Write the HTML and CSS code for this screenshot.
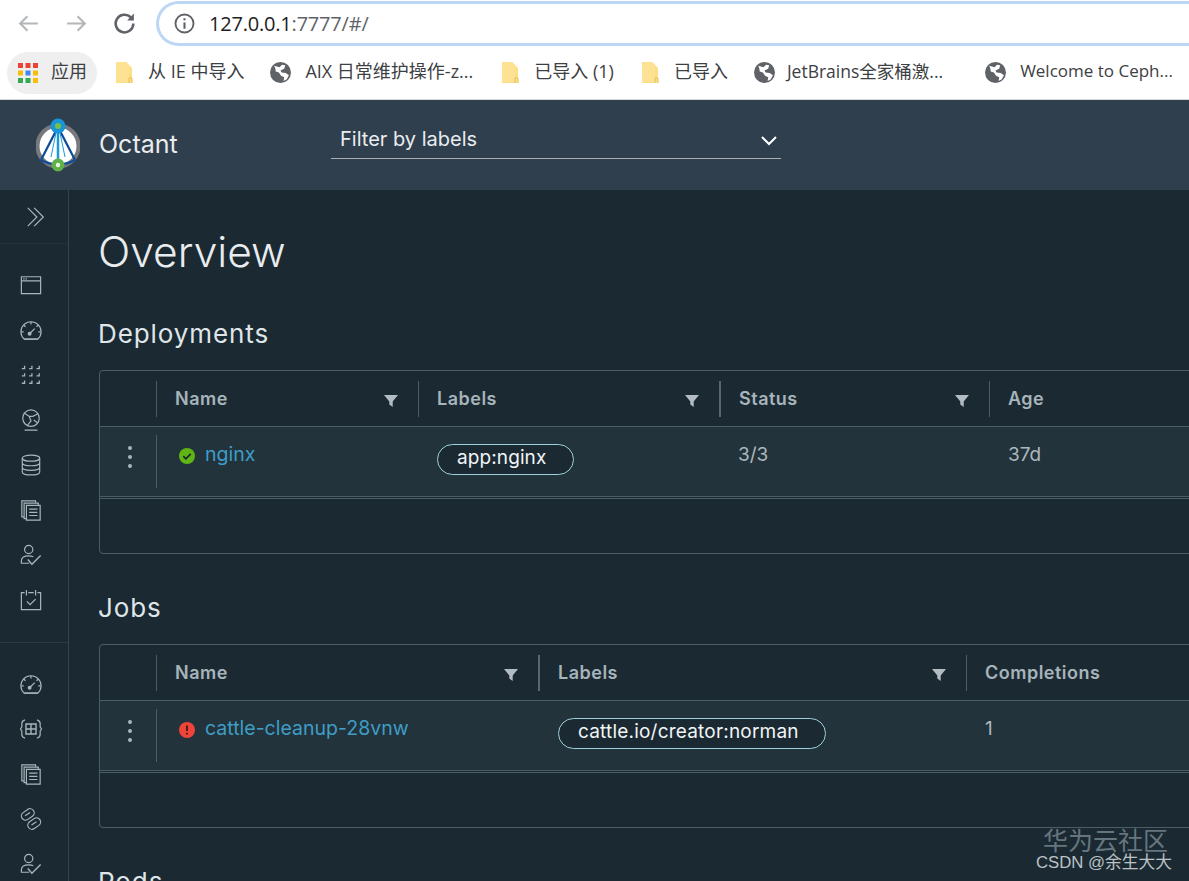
FILE: index.html
```html
<!DOCTYPE html>
<html lang="zh">
<head>
<meta charset="utf-8">
<title>Octant</title>
<link rel="stylesheet" href="styles.css">
</head>
<body>
<svg class="defs" width="0" height="0" aria-hidden="true">
  <symbol id="globe" viewBox="0 0 20 20"><circle cx="10" cy="10" r="10" fill="#5f6368"/><path d="M4 3.5l5 1.5 2.5-2.5 3 .5-1 3.5-3.5 1.5 1 2 4 .5 3 2-2 4-3 1.500.5-3.500-3-1.500-2-3-3-1-.5-3z" fill="#fff"/></symbol>
  <symbol id="folder" viewBox="0 0 18 22"><path d="M1 0h10l6 6v15H1z" fill="#fcdf84"/><path d="M1 0h10l3 3v17H1z" fill="#fde293"/><path d="M14 21v-5h3v5" fill="none" stroke="#e8bf5a"/></symbol>
  <symbol id="funnel" viewBox="0 0 16 16"><path d="M1 2h14L9.700 8.500V14L6.300 11.500V8.500z" fill="#b3bcc2"/></symbol>
  <symbol id="gauge" viewBox="0 0 24 24" fill="none" stroke="#a8b6bd" stroke-width="1.300"><g transform="translate(0 1.500)"><path d="M4.500 20.500A10.800 10.800 0 0 1 1 12.500a11 11 0 0 1 22 0 10.800 10.800 0 0 1-3.500 8z"/><path d="M4.500 20.500h15M12 1.500v3M4 5l2 2M20 5l-2 2M1.500 12.500h2.500M20 12.500h2.500M11 14l5-5"/><circle cx="10.500" cy="14.500" r="1.500" fill="#a8b6bd"/></g></symbol>
  <symbol id="pages" viewBox="0 0 24 24" fill="none" stroke="#a8b6bd" stroke-width="1.300"><path d="M4.500 19.500H2V2h15v2"/><path d="M7 21.500H4.500V4.500H20v2"/><path d="M7 7h15v16H7zM10 11h9M10 14.500h9M10 18h9"/></symbol>
  <symbol id="user" viewBox="0 0 24 24" fill="none" stroke="#a8b6bd" stroke-width="1.300"><circle cx="9.500" cy="6" r="4.500"/><path d="M10 21H1.500v-2.500c0-4 4-5.500 8-5.500 2 0 3.500.3 5 1"/><path d="M8.500 17l4.500 5 9.500-9.500" stroke-width="1.500"/></symbol>
</svg>

<div class="browser">
  <div class="toolbar">
    <svg class="nav-icon" viewBox="0 0 24 24" fill="none" stroke="#b4b7ba" stroke-width="2"><path d="M21 12H4M11 5l-7 7 7 7"/></svg>
    <svg class="nav-icon" viewBox="0 0 24 24" fill="none" stroke="#b4b7ba" stroke-width="2"><path d="M3 12h17M13 5l7 7-7 7"/></svg>
    <svg class="nav-icon" viewBox="0 0 24 24" fill="none" stroke="#5f6368" stroke-width="2.400"><path d="M20.500 12a8.500 8.500 0 1 1-2.500-6"/><path d="M21 2.500V9h-6.500z" fill="#5f6368" stroke="none"/></svg>
    <div class="omnibox">
      <svg class="info" viewBox="0 0 20 20" fill="none" stroke="#5f6368" stroke-width="1.800"><circle cx="10" cy="10" r="8.600"/><path d="M10 9v6" stroke-width="2"/><path d="M10 5v2" stroke-width="2"/></svg>
      <span class="url">127.0.0.1<span class="url-rest">:7777/#/</span></span>
    </div>
  </div>
  <div class="bookmarks">
    <div class="apps">
      <svg class="apps-grid" viewBox="0 0 20 20">
        <rect x="0" y="0" width="5" height="5" fill="#ea4335"/><rect x="7.500" y="0" width="5" height="5" fill="#ea4335"/><rect x="15" y="0" width="5" height="5" fill="#ea4335"/>
        <rect x="0" y="7.500" width="5" height="5" fill="#fbbc05"/><rect x="7.500" y="7.500" width="5" height="5" fill="#4285f4"/><rect x="15" y="7.500" width="5" height="5" fill="#fbbc05"/>
        <rect x="0" y="15" width="5" height="5" fill="#34a853"/><rect x="7.500" y="15" width="5" height="5" fill="#34a853"/><rect x="15" y="15" width="5" height="5" fill="#fbbc05"/>
      </svg>
      <span>应用</span>
    </div>
    <div class="bm bm-1"><svg class="bm-folder"><use href="#folder"/></svg><span>从 IE 中导入</span></div>
    <div class="bm bm-2"><svg class="bm-globe"><use href="#globe"/></svg><span>AIX 日常维护操作-z...</span></div>
    <div class="bm bm-3"><svg class="bm-folder"><use href="#folder"/></svg><span>已导入 (1)</span></div>
    <div class="bm bm-4"><svg class="bm-folder"><use href="#folder"/></svg><span>已导入</span></div>
    <div class="bm bm-5"><svg class="bm-globe"><use href="#globe"/></svg><span>JetBrains全家桶激...</span></div>
    <div class="bm bm-6"><svg class="bm-globe"><use href="#globe"/></svg><span>Welcome to Ceph...</span></div>
  </div>
</div>

<header class="app-header">
  <svg class="logo" viewBox="0 0 44 54">
    <circle cx="22" cy="28" r="20.500" fill="#fff" stroke="#77797c" stroke-width="4"/>
    <path d="M5 42L22 9l17 33" fill="none" stroke="#0d4c9b" stroke-width="2.200"/>
    <path d="M5 42q17 9 34 0" fill="none" stroke="#0d4c9b" stroke-width="2.500"/>
    <path d="M22 9v38" stroke="#1b9ad6" stroke-width="2.500"/>
    <path d="M15 39L21 10M29 39L23 10" fill="none" stroke="#1b9ad6" stroke-width="1"/>
    <circle cx="22" cy="8" r="7.500" fill="#1a94d8"/><circle cx="22" cy="8" r="3" fill="#7ac143"/>
    <circle cx="22" cy="47" r="6.500" fill="#5fb14a"/><circle cx="22" cy="47" r="2.200" fill="#e8f5e0"/>
  </svg>
  <span class="brand">Octant</span>
  <div class="filter">
    <span>Filter by labels</span>
    <svg class="chevron" viewBox="0 0 16 10" fill="none" stroke="#fff" stroke-width="2"><path d="M1 1l7 7 7-7"/></svg>
  </div>
</header>

<div class="app-body">
  <nav class="sidenav">
    <div class="collapse">
      <svg class="side-icon" viewBox="0 0 24 24" fill="none" stroke="#a8b6bd" stroke-width="1.300"><path d="M3 2l10 10L3 22M10 2l10 10-10 10"/></svg>
    </div>
    <div class="nav-group nav-group-1">
      <svg class="side-icon" viewBox="0 0 24 24" fill="none" stroke="#a8b6bd" stroke-width="1.300"><path d="M1.500 3h21v18.500h-21zM1.500 7.500h21"/><path d="M3.500 5.300h5" stroke-dasharray="1.500 1"/></svg>
      <svg class="side-icon"><use href="#gauge"/></svg>
      <svg class="side-icon" viewBox="0 0 24 24" fill="none" stroke="#a8b6bd" stroke-width="1.400"><path d="M2 5h3V2M10 5h3V2M18 5h3V2M2 13h3v-3M10 13h3v-3M18 13h3v-3M2 21h3v-3M10 21h3v-3M18 21h3v-3"/></svg>
      <svg class="side-icon" viewBox="0 0 24 24" fill="none" stroke="#a8b6bd" stroke-width="1.300"><circle cx="12" cy="10" r="9"/><path d="M4 4l6 4 2 5-4 5M20 5l-6 3-4 0M15 12l4 3M5 23h14"/></svg>
      <svg class="side-icon" viewBox="0 0 24 24" fill="none" stroke="#a8b6bd" stroke-width="1.300"><ellipse cx="12" cy="4.500" rx="9.500" ry="3.300"/><path d="M2.500 4.500v15c0 2 4 3.300 9.500 3.300s9.500-1.300 9.500-3.300v-15M2.500 9.500c0 2 4 3.300 9.500 3.300s9.500-1.300 9.500-3.300M2.500 14.500c0 2 4 3.300 9.500 3.300s9.500-1.300 9.500-3.300"/></svg>
      <svg class="side-icon"><use href="#pages"/></svg>
      <svg class="side-icon"><use href="#user"/></svg>
      <svg class="side-icon" viewBox="0 0 24 24" fill="none" stroke="#a8b6bd" stroke-width="1.300"><path d="M5 4H1.500v18.500h21V4H19M9 4h6M7 1v6M17 1v6"/><path d="M7.500 13.500l3.500 3.500 6-6"/></svg>
    </div>
    <div class="nav-group">
      <svg class="side-icon"><use href="#gauge"/></svg>
      <svg class="side-icon" viewBox="0 0 24 24" fill="none" stroke="#a8b6bd" stroke-width="1.300"><path d="M5.500 2Q2 3 2 6v4l-1.500 2L2 14v4q0 3 3.500 4M18.500 2Q22 3 22 6v4l1.500 2-1.500 2v4q0 3-3.500 4"/><path d="M6.500 6.500h11v11h-11zM12 6.500v11M6.500 12h11" stroke-width="1.500"/></svg>
      <svg class="side-icon"><use href="#pages"/></svg>
      <svg class="side-icon" viewBox="0 0 24 24" fill="none" stroke="#a8b6bd" stroke-width="1.300"><g transform="rotate(-35 8.500 7)"><rect x="1" y="2.500" width="15" height="9" rx="4.500"/></g><path d="M5.500 8.500L11 5"/><g transform="rotate(-35 15.500 17)"><rect x="8" y="12.500" width="15" height="9" rx="4.500"/></g><path d="M12.500 18.500L18 15"/></svg>
      <svg class="side-icon"><use href="#user"/></svg>
    </div>
  </nav>

  <main class="content">
    <h1 class="page-title">Overview</h1>

    <section class="panel">
      <h2 class="panel-title">Deployments</h2>
      <div class="table">
        <div class="row head cols-deploy">
          <div class="cell gutter"></div>
          <div class="cell th sep">Name<svg class="funnel"><use href="#funnel"/></svg></div>
          <div class="cell th sep">Labels<svg class="funnel"><use href="#funnel"/></svg></div>
          <div class="cell th sep sep-strong">Status<svg class="funnel"><use href="#funnel"/></svg></div>
          <div class="cell th sep">Age</div>
        </div>
        <div class="row body cols-deploy">
          <div class="cell gutter kebab"><i></i><i></i><i></i></div>
          <div class="cell td sep">
            <svg class="status" viewBox="0 0 16 16"><circle cx="8" cy="8" r="8" fill="#60b515"/><path d="M4.300 8.200l2.600 2.600 4.800-5" fill="none" stroke="#17282b" stroke-width="1.700"/></svg>
            <a class="link">nginx</a>
          </div>
          <div class="cell td"><span class="pill pill-deploy">app:nginx</span></div>
          <div class="cell td">3/3</div>
          <div class="cell td">37d</div>
        </div>
        <div class="table-foot"></div>
      </div>
    </section>

    <section class="panel">
      <h2 class="panel-title">Jobs</h2>
      <div class="table">
        <div class="row head cols-jobs">
          <div class="cell gutter"></div>
          <div class="cell th sep">Name<svg class="funnel"><use href="#funnel"/></svg></div>
          <div class="cell th sep sep-strong">Labels<svg class="funnel"><use href="#funnel"/></svg></div>
          <div class="cell th sep">Completions</div>
        </div>
        <div class="row body cols-jobs">
          <div class="cell gutter kebab"><i></i><i></i><i></i></div>
          <div class="cell td sep">
            <svg class="status" viewBox="0 0 16 16"><circle cx="8" cy="8" r="8" fill="#f0433a"/><path d="M8 3.500v5.500M8 10.700v1.800" fill="none" stroke="#3a1c1c" stroke-width="1.800"/></svg>
            <a class="link">cattle-cleanup-28vnw</a>
          </div>
          <div class="cell td"><span class="pill pill-job">cattle.io/creator:norman</span></div>
          <div class="cell td">1</div>
        </div>
        <div class="table-foot"></div>
      </div>
    </section>

    <section class="panel">
      <h2 class="panel-title">Pods</h2>
    </section>
  </main>
</div>

<div class="watermark">
  <div class="wm-top">华为云社区</div>
  <div class="wm-bottom">CSDN @余生大大</div>
</div>
</body>
</html>
```

FILE: styles.css
```css
* { box-sizing: border-box; }
html, body { margin: 0; height: 100%; overflow: hidden; }
body {
  width: 1189px;
  height: 881px;
  background: #1b2a32;
  font-family: Inter, "Noto Sans", "Noto Sans CJK SC", sans-serif;
  position: relative;
}
.defs { position: absolute; }

/* browser chrome */
.browser { height: 100px; background: #fff; border-bottom: 1px solid #d5d8da; overflow: hidden; }
.toolbar { height: 47px; display: flex; align-items: center; padding-left: 16px; gap: 23px; overflow: hidden; }
.nav-icon { width: 25px; height: 25px; flex: none; margin-top: -1px; }
.omnibox {
  flex: 1;
  min-width: 0;
  height: 45px;
  margin: 0 -24px 0 -4px;
  border: 3px solid #bdd6f6;
  border-right: 0;
  border-radius: 23px 0 0 23px;
  display: flex;
  align-items: center;
  padding-left: 15px;
}
.info { width: 21px; height: 21px; flex: none; }
.url {
  margin-left: 14px;
  font-family: "Open Sans", "Noto Sans", sans-serif;
  font-size: 20px;
  color: #202124;
  letter-spacing: -0.200px;
}
.url-rest { color: #5f6368; }
.bookmarks {
  height: 52px;
  display: flex;
  align-items: center;
  padding-left: 7px;
  font-family: "Open Sans", "Noto Sans CJK SC", sans-serif;
  font-size: 18px;
  line-height: 24px;
  color: #3c4043;
  white-space: nowrap;
}
.bm span, .apps span { margin-top: -4px; }
.apps {
  width: 90px;
  height: 42px;
  border-radius: 21px;
  background: #efefef;
  display: flex;
  align-items: center;
  gap: 13px;
  padding-left: 11px;
  flex: none;
  margin-top: -1px;
}
.apps-grid { width: 20px; height: 20px; }
.bm { display: flex; align-items: center; flex: none; }
.bm-folder { width: 18px; height: 22px; margin-right: 15px; flex: none; }
.bm-globe { width: 21px; height: 21px; margin: -2px 14px 0 0; flex: none; }
.bm-1 { margin-left: 18px; }
.bm-2 { margin-left: 26px; }
.bm-3 { margin-left: 28px; }
.bm-4 { margin-left: 27px; }
.bm-5 { margin-left: 26px; font-size: 17.500px; }
.bm-5 .bm-globe { margin-right: 12px; }
.bm-6 { margin-left: 42px; font-size: 17px; }

/* app header */
.app-header {
  height: 90px;
  background: #2f3f4d;
  display: flex;
  align-items: center;
  padding-left: 36px;
  color: #fff;
}
.logo { width: 44px; height: 54px; flex: none; }
.brand { margin: -2px 0 0 19px; font-size: 25px; color: #eaedf0; width: 232px; flex: none; font-weight: 400; }
.filter {
  width: 450px;
  height: 40px;
  margin-top: -13px;
  border-bottom: 1px solid #a8b0b5;
  display: flex;
  align-items: center;
  justify-content: space-between;
  padding: 2px 4px 0 9px;
  font-size: 20px;
  color: #eaedf0;
}
.chevron { width: 16px; height: 10px; margin-top: 4px; }

/* body */
.app-body { display: flex; height: 691px; overflow: hidden; }
.sidenav { width: 69px; flex: none; border-right: 1px solid #33444e; }
.collapse { height: 54px; padding: 16px 0 0 25px; border-bottom: 1px solid #22323a; }
.nav-group { display: flex; flex-direction: column; gap: 23px; padding: 30px 0 0 20px; }
.nav-group-1 { height: 399px; border-bottom: 1px solid #2a3a42; }
.nav-group + .nav-group { padding-top: 30px; }
.side-icon { width: 22px; height: 22px; display: block; flex: none; }

.content { flex: 1; min-width: 0; padding-left: 29px; overflow: hidden; }
.page-title {
  margin: 38px 0 8px;
  font-size: 42.500px;
  line-height: 48px;
  font-weight: 300;
  color: #e9ecef;
}
.panel-title {
  margin: 0;
  font-size: 26px;
  line-height: 30px;
  font-weight: 400;
  letter-spacing: 0.900px;
  color: #dfe5e8;
}
.panel { padding-top: 35px; }
.panel-title + .table { margin: 21px 0 4px 1px; }

.table {
  width: 1200px;
  border: 1px solid #4b5e68;
  border-radius: 4px;
}
.row { display: grid; }
.cols-deploy { grid-template-columns: 56px 262px 301px 270px 1fr; }
.cols-jobs { grid-template-columns: 56px 382px 428px 1fr; }
.head { height: 56px; border-bottom: 1px solid #4b5e68; align-items: center; }
.body { height: 70px; background: #22333b; border-bottom: 1px solid #4b5e68; }
.table-foot { height: 55px; border-top: 1px solid #4b5e68; margin-top: 1px; }
.cell { position: relative; min-width: 0; }
.th {
  height: 36px;
  display: flex;
  align-items: center;
  justify-content: space-between;
  padding: 0 19px 0 18px;
  font-size: 18px;
  letter-spacing: 0.500px;
  font-weight: 600;
  color: #a7b4bb;
}
.sep { border-left: 1px solid #4b5e68; }
.sep-strong { border-left: 2px solid #56676f; padding-left: 18px; }
.funnel { width: 16px; height: 16px; margin-top: 5px; flex: none; }
.td {
  font-size: 19px;
  color: #acb8be;
  padding: 16px 0 0 19px;
  line-height: 24px;
}
.body .sep { display: flex; align-items: flex-start; margin: 8px 0 0; height: 53px; padding-top: 7px; padding-left: 22px; }
.status { width: 16px; height: 16px; flex: none; margin: 6px 10px 0 0; }
.link { color: #3f9dc6; font-size: 19.500px; line-height: 24px; }
.pill {
  display: block;
  height: 31px;
  margin-top: 1px;
  border: 1px solid #9fd0dc;
  border-radius: 16px;
  padding: 0 19px;
  line-height: 26px;
  color: #f2f5f6;
  font-size: 19px;
  letter-spacing: 0.100px;
  background: #1b2a32;
  white-space: nowrap;
}
.pill-deploy { width: 137px; }
.pill-job { width: 268px; margin-left: 1px; letter-spacing: 0.200px; }
.kebab { display: flex; flex-direction: column; align-items: center; gap: 5px; padding: 19px 0 0 3px; }
.kebab i { width: 4px; height: 4px; border-radius: 50%; background: #a8b6bd; }

.watermark {
  position: absolute;
  right: 17px;
  bottom: 8px;
  text-align: right;
  font-family: "Liberation Sans", "Noto Sans CJK SC", sans-serif;
}
.wm-top { font-size: 25px; line-height: 23px; color: #66767e; padding-right: 4px; }
.wm-bottom { font-size: 16.750px; line-height: 20px; color: #bcc2c6; }
```
